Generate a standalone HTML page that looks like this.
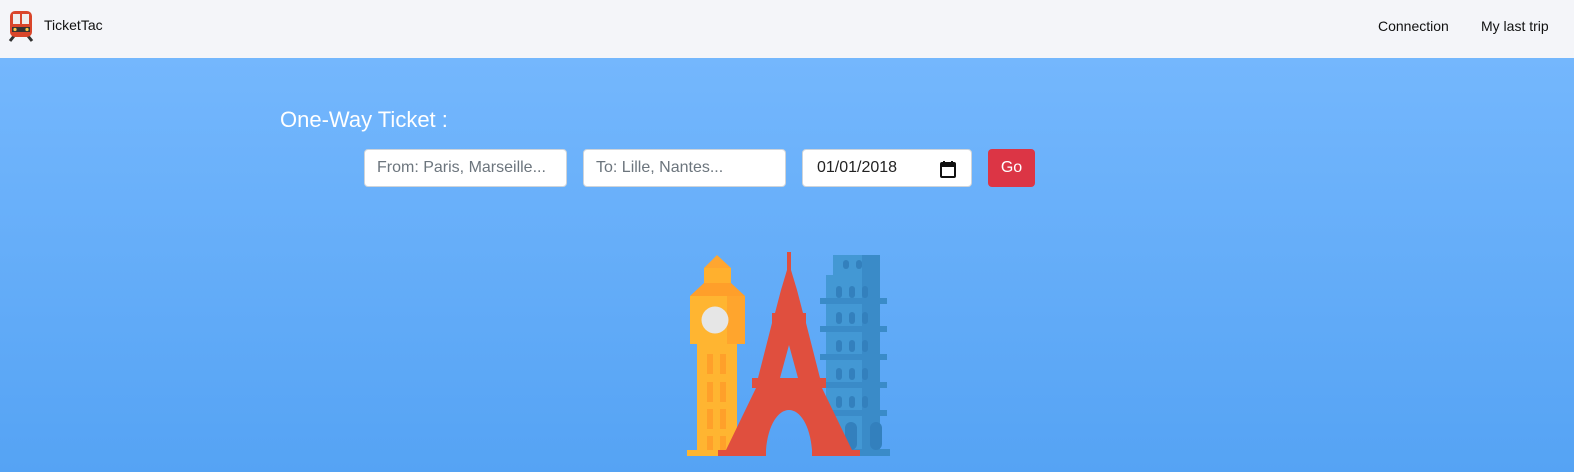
<!DOCTYPE html>
<html><head><style>
*{margin:0;padding:0;box-sizing:border-box}
body{width:1574px;height:472px;overflow:hidden;font-family:"Liberation Sans",sans-serif;background:#fff}
.nav{height:58px;background:#f4f5f9;position:relative}
.brand{position:absolute;left:44px;top:17px;font-size:14px;color:#111}
.nav a{position:absolute;top:18px;font-size:14px;color:#111;text-decoration:none}
.hero{position:absolute;top:58px;left:0;width:1574px;height:414px;background:linear-gradient(#74b7fd,#55a3f4)}
h1{position:absolute;left:280px;top:49px;font-weight:normal;color:#fff;font-size:22px}
.in{position:absolute;top:91px;height:38px;background:#fff;border:1px solid #ced4da;border-radius:4px;font-size:16px;color:#6c757d;padding:10px 12px;line-height:16px}
.go{position:absolute;left:988px;top:91px;width:47px;height:38px;background:#dc3545;border-radius:4px;color:#fff;font-size:16px;text-align:center;line-height:38px}
</style></head><body>
<div class="nav">
<svg style="position:absolute;left:8px;top:10px" width="26" height="32" viewBox="0 0 26 32">
<path d="M6 26 L2 31 M20 26 L24 31" stroke="#333" stroke-width="3"/>
<rect x="2" y="1" width="22" height="26" rx="5" fill="#d9462b"/>
<rect x="5" y="4" width="7" height="10" fill="#eee"/><rect x="14" y="4" width="7" height="10" fill="#eee"/>
<rect x="4" y="17" width="18" height="5" fill="#333"/>
<circle cx="7" cy="19.5" r="1.6" fill="#f7c948"/><circle cx="19" cy="19.5" r="1.6" fill="#f7c948"/>
</svg>
<div class="brand">TicketTac</div>
<a style="left:1378px">Connection</a><a style="left:1481px">My last trip</a>
</div>
<div class="hero">
<h1>One-Way Ticket :</h1>
<div class="in" style="left:364px;width:203px">From: Paris, Marseille...</div>
<div class="in" style="left:583px;width:203px">To: Lille, Nantes...</div>
<div class="in" style="left:802px;width:170px;color:#222;padding-left:14px">01/01/2018
<svg style="position:absolute;right:14px;top:10px" width="18" height="19" viewBox="0 0 18 19"><rect x="2" y="3" width="14" height="14" rx="1" fill="none" stroke="#111" stroke-width="2"/><rect x="2" y="3" width="14" height="4" fill="#111"/><path d="M5 1v3M13 1v3" stroke="#111" stroke-width="2"/></svg></div>
<div class="go">Go</div>
<svg style="position:absolute;left:0;top:-58px" width="1574" height="472">
<!-- Big Ben -->
<polygon points="717,255 704,268 731,268" fill="#ffa630"/>
<rect x="704" y="268" width="27" height="15" fill="#ffb02e"/>
<polygon points="704,283 731,283 745,296 690,296" fill="#ff9f2a"/>
<rect x="690" y="296" width="55" height="48" fill="#ffb531"/>
<rect x="727" y="296" width="18" height="48" fill="#ffa52d"/>
<circle cx="715" cy="320" r="13.5" fill="#e6e6e6"/>
<rect x="697" y="344" width="40" height="110" fill="#ffb531"/>
<g fill="#ffa02a"><rect x="707" y="354" width="6" height="20"/><rect x="720" y="354" width="6" height="20"/>
<rect x="707" y="382" width="6" height="20"/><rect x="720" y="382" width="6" height="20"/>
<rect x="707" y="409" width="6" height="20"/><rect x="720" y="409" width="6" height="20"/>
<rect x="707" y="436" width="6" height="14"/><rect x="720" y="436" width="6" height="14"/></g>
<rect x="687" y="450" width="50" height="6" fill="#ffb531"/>
<!-- Pisa -->
<rect x="833" y="255" width="41" height="20" fill="#4398d4"/>
<rect x="826" y="275" width="54" height="180" fill="#4398d4"/>
<rect x="862" y="255" width="18" height="200" fill="#3a8bc8"/>
<g fill="#3a8bc8"><rect x="820" y="298" width="67" height="6"/><rect x="820" y="326" width="67" height="6"/><rect x="820" y="354" width="67" height="6"/><rect x="820" y="382" width="67" height="6"/><rect x="820" y="410" width="67" height="6"/><rect x="818" y="449" width="72" height="7"/></g>
<g fill="#3380bd">
<rect x="843" y="260" width="6" height="9" rx="3"/><rect x="856" y="260" width="6" height="9" rx="3"/>
<rect x="836" y="286" width="6" height="12" rx="3"/><rect x="849" y="286" width="6" height="12" rx="3"/><rect x="862" y="286" width="6" height="12" rx="3"/>
<rect x="836" y="312" width="6" height="12" rx="3"/><rect x="849" y="312" width="6" height="12" rx="3"/><rect x="862" y="312" width="6" height="12" rx="3"/>
<rect x="836" y="340" width="6" height="12" rx="3"/><rect x="849" y="340" width="6" height="12" rx="3"/><rect x="862" y="340" width="6" height="12" rx="3"/>
<rect x="836" y="368" width="6" height="12" rx="3"/><rect x="849" y="368" width="6" height="12" rx="3"/><rect x="862" y="368" width="6" height="12" rx="3"/>
<rect x="836" y="396" width="6" height="12" rx="3"/><rect x="849" y="396" width="6" height="12" rx="3"/><rect x="862" y="396" width="6" height="12" rx="3"/>
<rect x="845" y="422" width="12" height="28" rx="6"/><rect x="870" y="422" width="12" height="28" rx="6"/></g>
<!-- Eiffel -->
<path d="M787,252 h4 v18 L797,290 L803,313 h3 v10 L820,378 h6 v10 h-4 L852,450 h8 v6 h-48 v-6 C810,425 800,410 789,410 C778,410 768,425 766,450 v6 h-48 v-6 h8 L756,388 h-4 v-10 h6 L772,323 v-10 h3 L781,290 L787,270 z M789,345 L780,378 H798 z" fill="#e04f3e" fill-rule="evenodd"/>
</svg>
</div>
</body></html>
